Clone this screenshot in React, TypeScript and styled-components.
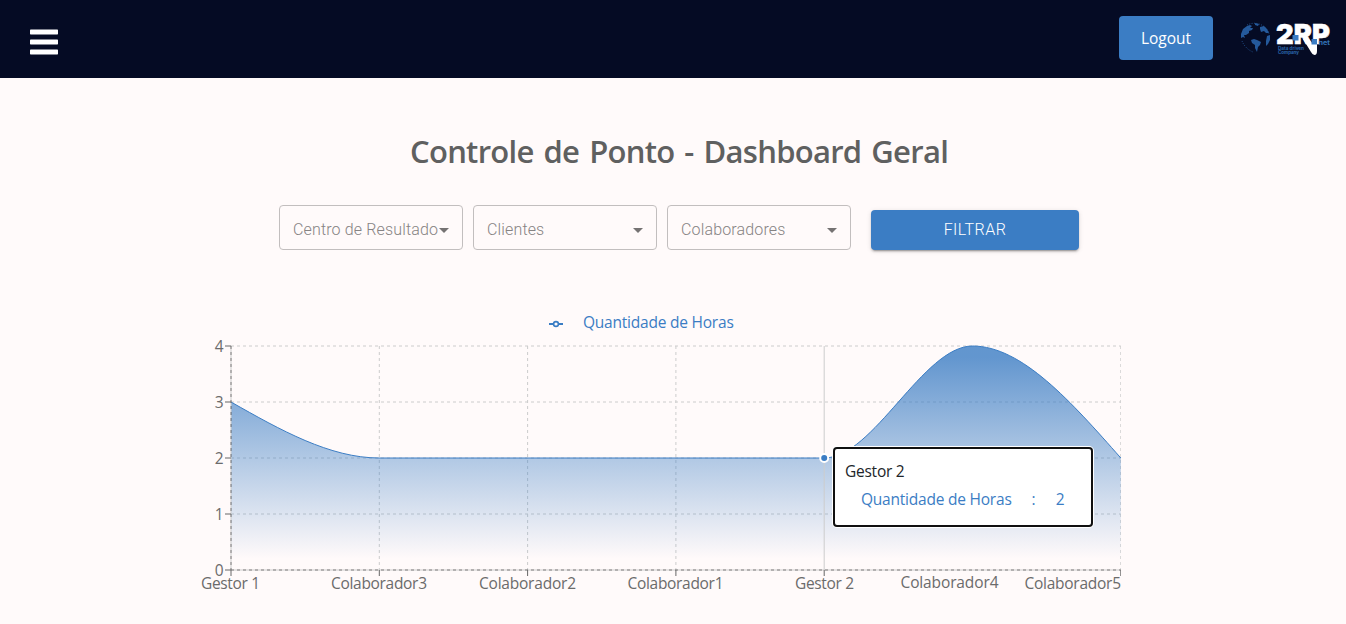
import React from 'react';
import styled, { createGlobalStyle } from 'styled-components';

const BLUE = '#3b7dc4';
const SANS = '"Open Sans", "Noto Sans", sans-serif';

const GlobalStyle = createGlobalStyle`
  *, *::before, *::after { box-sizing: border-box; }
  html, body { margin: 0; background: #fffafa; }
  body { font-family: ${SANS}; color: #212529; overflow: hidden; }
`;

const Page = styled.div`
  display: flex;
  flex-direction: column;
  min-height: 624px;
`;

const Header = styled.header`
  height: 78px;
  padding: 0 16px 0 30px;
  display: flex;
  align-items: center;
  justify-content: space-between;
  background: #050b24;
`;

const MenuButton = styled.button`
  width: 28px;
  height: 26px;
  margin-top: 6px;
  padding: 0;
  border: 0;
  background: none;
  display: flex;
  svg { display: block; }
`;

const HeaderActions = styled.div`
  display: flex;
  align-items: center;
  gap: 26px;
`;

const LogoutButton = styled.button`
  width: 94px;
  height: 44px;
  margin-bottom: 2px;
  padding: 0;
  border: 0;
  border-radius: 4px;
  background: ${BLUE};
  color: #fff;
  font: 400 15.5px/24px ${SANS};
  letter-spacing: 0;
`;

const LogoMark = styled.svg`
  display: block;
  overflow: visible;
`;

const Content = styled.main`
  width: 950px;
  margin-left: 171px;
  padding-top: 49px;
`;

const Title = styled.h1`
  width: 540px;
  margin: 0 0 0 239px;
  color: #5f6060;
  font: 600 31px/48px ${SANS};
  letter-spacing: -0.72px;
  word-spacing: 2.6px;
  white-space: nowrap;
`;

const Filters = styled.div`
  display: flex;
  gap: 10px;
  margin: 30px 0 0 108px;
`;

const Select = styled.div`
  width: 184px;
  height: 45px;
  padding: 4px 13px 0;
  display: flex;
  align-items: center;
  justify-content: space-between;
  border: 1px solid #c2bebe;
  border-radius: 4px;
  color: #868383;
  font: 300 16px/23px Roboto, sans-serif;
  letter-spacing: 0.15px;
  white-space: nowrap;
`;

const Caret = styled.span`
  flex: none;
  width: 0;
  height: 0;
  margin-top: 1px;
  border: 5px solid transparent;
  border-top-color: #757272;
  border-bottom: 0;
`;

const FilterButton = styled.button`
  width: 208px;
  height: 40px;
  margin: 5px 0 0 10px;
  border: 0;
  border-radius: 4px;
  background: ${BLUE};
  color: #fff;
  font: 300 16px/24px Roboto, sans-serif;
  letter-spacing: 0.46px;
  box-shadow: 0 3px 1px -2px rgba(0, 0, 0, 0.2), 0 2px 2px rgba(0, 0, 0, 0.14), 0 1px 5px rgba(0, 0, 0, 0.12);
`;

const ChartArea = styled.section`
  position: relative;
  width: 950px;
  margin-top: 61px;
`;

const Legend = styled.div`
  height: 24px;
  padding-left: 378px;
  display: flex;
  align-items: center;
  color: ${BLUE};
  svg { margin: 2px 20px 0 0; }
`;

const SeriesName = styled.span`
  margin-bottom: 2px;
  font: 400 15.5px/24px ${SANS};
  letter-spacing: -0.22px;
  white-space: nowrap;
`;

const Plot = styled.svg`
  display: block;
  overflow: hidden;
  text { font: 400 15.5px ${SANS}; fill: #6b6b6b; }
`;

const Tooltip = styled.div`
  position: absolute;
  left: 664px;
  top: 138px;
  width: 256px;
  height: 76px;
  padding: 10px;
  border-radius: 2px;
  background: #fff;
  box-shadow: 0 0 0 2px #101010, 0 0 0 3px #fff;
`;

const TooltipLabel = styled.p`
  margin: 0;
  font: 400 15.5px/24px ${SANS};
  letter-spacing: -0.25px;
`;

const TooltipRow = styled.div`
  display: flex;
  gap: 20px;
  margin-top: 4px;
  padding-left: 16px;
  color: ${BLUE};
  font: 400 15.5px/24px ${SANS};
`;

const points = [
  { name: 'Gestor 1', value: 3, label: 201, width: 59 },
  { name: 'Colaborador3', value: 2, label: 331, width: 96 },
  { name: 'Colaborador2', value: 2, label: 479, width: 97 },
  { name: 'Colaborador1', value: 2, label: 627.5, width: 96 },
  { name: 'Gestor 2', value: 2, label: 795, width: 59 },
  { name: 'Colaborador4', value: 4, label: 900.5, width: 98, floating: true },
  { name: 'Colaborador5', value: 2, label: 1024.5, width: 96.5 },
];
const ACTIVE = 4;
const LEFT = 60;
const RIGHT = 949.8;
const STEP = (RIGHT - LEFT) / 6;
const xAt = (i: number) => LEFT + STEP * i;
const yAt = (v: number) => 235 - v * 56;
const slopes = [28, 0, 0, 0, 0, 0, 56];

const curve = points
  .map((p, i) => {
    const x = xAt(i);
    const y = yAt(p.value);
    if (i === 0) return `M${x},${y}`;
    const px = xAt(i - 1);
    const py = yAt(points[i - 1].value);
    return `C${px + STEP / 3},${py + slopes[i - 1]} ${x - STEP / 3},${y - slopes[i]} ${x},${y}`;
  })
  .join('');

const axes = `M${LEFT},11V235M${LEFT},235H${RIGHT}`;

function Chart() {
  return (
    <Plot width="950" height="272" viewBox="0 0 950 272">
      <defs>
        <linearGradient id="hours" x1="0" y1="0" x2="0" y2="1">
          <stop offset="5%" stopColor={BLUE} stopOpacity={0.8} />
          <stop offset="95%" stopColor={BLUE} stopOpacity={0} />
        </linearGradient>
      </defs>
      <g stroke="#ccc" strokeDasharray="3 3">
        {[1, 2, 3, 4].map((v) => (
          <line key={v} x1={LEFT} x2={RIGHT} y1={yAt(v)} y2={yAt(v)} />
        ))}
        {points.map((p, i) => (i === 0 || i === ACTIVE || p.floating ? null : (
          <line key={p.name} x1={xAt(i)} x2={xAt(i)} y1="11" y2="235" />
        )))}
      </g>
      <path d={`${curve}L${RIGHT},235L${LEFT},235Z`} fill="url(#hours)" />
      <path d={curve} fill="none" stroke={BLUE} />
      <path d={axes} fill="none" stroke="#ccc" strokeDasharray="3 3" strokeDashoffset="3" />
      <g stroke="#666">
        <path d={axes} fill="none" strokeDasharray="3 3" />
        {[0, 1, 2, 3, 4].map((v) => (
          <line key={v} x1="54" x2="60" y1={yAt(v)} y2={yAt(v)} />
        ))}
        {points.map((p, i) => (p.floating ? null : (
          <line key={p.name} x1={xAt(i)} x2={xAt(i)} y1="235" y2="241" />
        )))}
      </g>
      {[0, 1, 2, 3, 4].map((v) => (
        <text key={v} x="52.5" y={yAt(v) + 6} textAnchor="end">{v}</text>
      ))}
      {points.map((p) => (
        <text key={p.name} x={p.label - 171} y={p.floating ? 253.4 : 254.4} textLength={p.width}>{p.name}</text>
      ))}
      <line x1={xAt(ACTIVE)} x2={xAt(ACTIVE)} y1="11" y2="235" stroke="#ccc" />
      <circle cx={xAt(ACTIVE)} cy={yAt(2)} r="4" fill={BLUE} stroke="#fff" strokeWidth="2" />
    </Plot>
  );
}

function Logo() {
  return (
    <LogoMark width="91" height="40" viewBox="1239 18 91 40">
      <g fill="#24599b">
        <path d="M1241 38l0-5 2-5 4-3 3-1 2 1-2 2 3 0-1 2-3 1 0 2-3 2-2 0 1 3-2-1-2 1z" />
        <path d="M1251 39l3-1 3 1 4 2-1 3-2 2-1 5-2-4 0-3-3-2z" />
        <path d="M1255 22l4 1-1 2-3-1zM1260 26l4-1 3 3 2 4-3 0-2-2-3 1-1-3z" />
        <path d="M1267 35l3-1 0 5-2 4-2 2 0-5z" />
      </g>
      <path d="M1242 40c2 5 6 9 11 11M1247 24c8-4 19-1 22 9" fill="none" stroke="#24599b" strokeWidth="0.8" strokeDasharray="1 1.4" />
      <text x="1276" y="43" textLength="54" lengthAdjust="spacingAndGlyphs" fill="#fff" stroke="#fff" strokeWidth="0.5" fontFamily="Inter, sans-serif" fontWeight="900" fontSize="27.5">2RP</text>
      <path d="M1303 38l6 0 3 4h5v8q0 4-2.500 4-2 0-3.500-3z" fill="#fff" />
      <path d="M1292.500 34h6v5.500h-6zM1311.500 38h5.500v5.500h-5.500z" fill={BLUE} />
      <text x="1318.500" y="43.500" textLength="11.500" lengthAdjust="spacingAndGlyphs" fill="#3373b8" fontFamily="Inter, sans-serif" fontWeight="700" fontSize="6">net</text>
      <g fill="#2c69ad" fontFamily="Inter, sans-serif" fontWeight="700" fontSize="4.500">
        <text x="1278" y="49" textLength="26" lengthAdjust="spacingAndGlyphs">Data driven</text>
        <text x="1278" y="53" textLength="21" lengthAdjust="spacingAndGlyphs">Company</text>
      </g>
    </LogoMark>
  );
}

export default function App() {
  return (
    <Page>
      <GlobalStyle />
      <Header>
        <MenuButton aria-label="Menu">
          <svg width="28" height="26" viewBox="0 0 28 26" fill="#fff">
            <rect y="0.5" width="28" height="5" rx="0.7" />
            <rect y="10.5" width="28" height="5" rx="0.7" />
            <rect y="20.5" width="28" height="5" rx="0.7" />
          </svg>
        </MenuButton>
        <HeaderActions>
          <LogoutButton>Logout</LogoutButton>
          <Logo />
        </HeaderActions>
      </Header>
      <Content>
        <Title>Controle de Ponto - Dashboard Geral</Title>
        <Filters>
          {['Centro de Resultado', 'Clientes', 'Colaboradores'].map((name) => (
            <Select key={name}>{name}<Caret /></Select>
          ))}
          <FilterButton>FILTRAR</FilterButton>
        </Filters>
        <ChartArea>
          <Legend>
            <svg width="14" height="10" viewBox="0 0 14 10" fill="none" stroke={BLUE} strokeWidth="1.8">
              <path d="M0 5h4.7M9.3 5H14" />
              <circle cx="7" cy="5" r="2.4" strokeWidth="1.6" />
            </svg>
            <SeriesName>Quantidade de Horas</SeriesName>
          </Legend>
          <Chart />
          <Tooltip>
            <TooltipLabel>Gestor 2</TooltipLabel>
            <TooltipRow>
              <SeriesName>Quantidade de Horas</SeriesName>
              <span>:</span>
              <span>2</span>
            </TooltipRow>
          </Tooltip>
        </ChartArea>
      </Content>
    </Page>
  );
}
